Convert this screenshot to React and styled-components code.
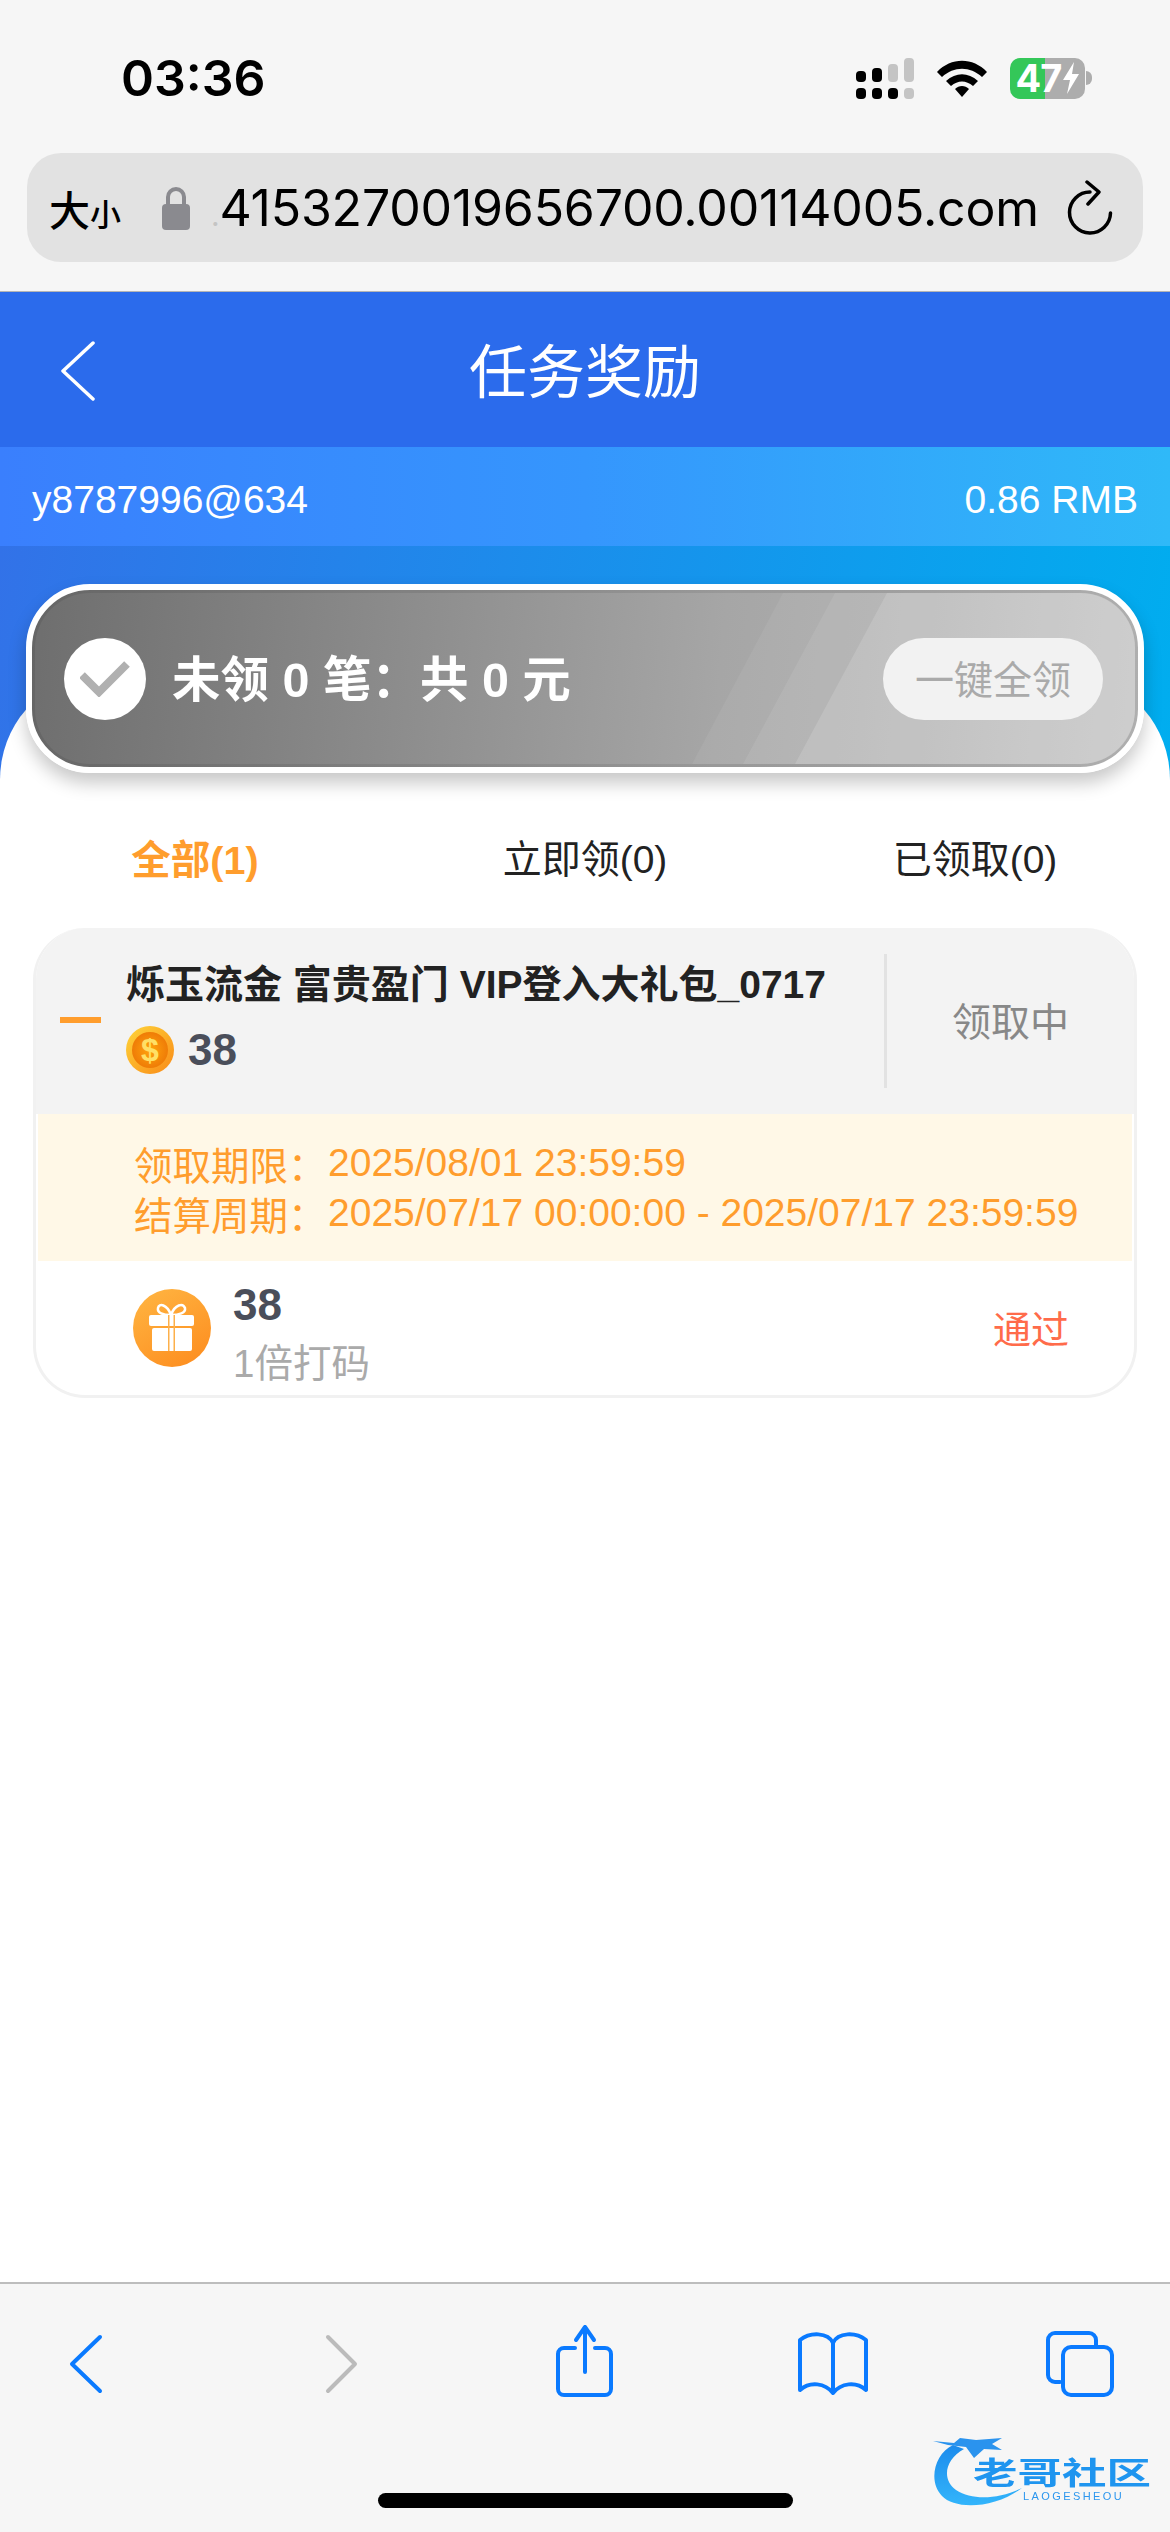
import styled, { createGlobalStyle } from 'styled-components';

const SANS = `"Liberation Sans", "Noto Sans CJK SC", sans-serif`;
const ORANGE = '#ff9d2d';

const GlobalStyle = createGlobalStyle`
  html, body {
    margin: 0;
    padding: 0;
    background: #fff;
  }
  * {
    box-sizing: border-box;
  }
`;

export default function App() {
  return (
    <Page>
      <GlobalStyle />
      <BrowserTop>
        <StatusBar>
          <Time>03:36</Time>
          <StatusIcons>
            <SignalIcon />
            <WifiIcon />
            <Battery>
              <BatteryLevel>
                47
                <BoltIcon />
              </BatteryLevel>
              <BatteryNub />
            </Battery>
          </StatusIcons>
        </StatusBar>
        <UrlBar>
          <TextSize>
            大<small>小</small>
          </TextSize>
          <LockIcon />
          <UrlText>
            <i>.</i>4153270019656700.00114005.com
          </UrlText>
          <ReloadIcon />
        </UrlBar>
      </BrowserTop>

      <NavBar>
        <NavBack />
        <NavTitle>任务奖励</NavTitle>
      </NavBar>

      <UserRow>
        <span>y8787996@634</span>
        <span>0.86 RMB</span>
      </UserRow>

      <Hero>
        <ClaimCard>
          <Stripe $top={748} $bottom={657} $alpha={0.06} />
          <Stripe $top={800} $bottom={708} $alpha={0.08} />
          <Stripe $top={852} $bottom={760} $alpha={0.14} />
          <CheckBadge>
            <CheckIcon />
          </CheckBadge>
          <ClaimText>未领 0 笔：共 0 元</ClaimText>
          <ClaimButton>一键全领</ClaimButton>
        </ClaimCard>
      </Hero>

      <Tabs>
        <Tab $active>全部(1)</Tab>
        <Tab>立即领(0)</Tab>
        <Tab>已领取(0)</Tab>
      </Tabs>

      <TaskCard>
        <TaskHead>
          <Dash />
          <TaskInfo>
            <TaskTitle>烁玉流金 富贵盈门 VIP登入大礼包_0717</TaskTitle>
            <AmountRow>
              <CoinIcon />
              <Amount>38</Amount>
            </AmountRow>
          </TaskInfo>
          <TaskStatus>领取中</TaskStatus>
        </TaskHead>
        <TaskDates>
          <DateLine>
            <DateLabel>领取期限：</DateLabel>2025/08/01 23:59:59
          </DateLine>
          <DateLine>
            <DateLabel>结算周期：</DateLabel>2025/07/17 00:00:00 - 2025/07/17 23:59:59
          </DateLine>
        </TaskDates>
        <TaskFoot>
          <GiftIcon />
          <RewardInfo>
            <Amount>38</Amount>
            <RewardNote>1倍打码</RewardNote>
          </RewardInfo>
          <PassLabel>通过</PassLabel>
        </TaskFoot>
      </TaskCard>

      <Spacer />

      <Toolbar>
        <ToolIcon viewBox="0 0 80 80">
          <path d="M54 19 L26 46 L54 73" />
        </ToolIcon>
        <ToolIcon viewBox="0 0 80 80" $muted>
          <path d="M33 19 L60 46 L33 73" />
        </ToolIcon>
        <ToolIcon viewBox="0 0 80 80">
          <path d="M32 30 H21 a6 6 0 0 0 -6 6 V71 a6 6 0 0 0 6 6 H62 a6 6 0 0 0 6 -6 V36 a6 6 0 0 0 -6 -6 H52" />
          <path d="M42 54 V9 M33 22 L42 9 L51 22" />
        </ToolIcon>
        <ToolIcon viewBox="0 0 80 80">
          <path d="M41 25 C36 14 18 14 8 22 V72 C18 63 33 65 41 75 C49 65 64 63 74 72 V22 C64 14 46 14 41 25 Z M41 25 V75" />
        </ToolIcon>
        <ToolIcon viewBox="0 0 80 80">
          <path d="M20 64 H15 a7 7 0 0 1 -7 -7 V22 a7 7 0 0 1 7 -7 H49 a7 7 0 0 1 7 7 V29" />
          <rect x="23" y="29" width="49" height="48" rx="8" />
        </ToolIcon>
      </Toolbar>

      <HomeIndicator />
      <Watermark>
        <DragonIcon />
        <WatermarkName>老哥社区</WatermarkName>
        <WatermarkLatin>LAOGESHEOU</WatermarkLatin>
      </Watermark>
    </Page>
  );
}

const SignalIcon = () => (
  <svg width="58" height="41" viewBox="0 0 58 41">
    <rect x="0" y="13" width="10" height="11" rx="4" fill="#000" />
    <rect x="16" y="10" width="10" height="14" rx="4" fill="#000" />
    <rect x="32" y="6" width="10" height="18" rx="4" fill="#c4c4c4" />
    <rect x="48" y="0" width="10" height="24" rx="4" fill="#c4c4c4" />
    <rect x="0" y="30" width="10" height="11" rx="4" fill="#000" />
    <rect x="16" y="30" width="10" height="11" rx="4" fill="#000" />
    <rect x="32" y="30" width="10" height="11" rx="4" fill="#000" />
    <rect x="48" y="30" width="10" height="11" rx="4" fill="#c4c4c4" />
  </svg>
);

const WifiIcon = () => (
  <svg width="52" height="38" viewBox="0 0 52 38">
    <path d="M1 13 C15 -2 37 -2 51 13 L46 18 C34 7 18 7 6 18 Z" fill="#000" />
    <path d="M10 22 C20 13 32 13 42 22 L37 27 C30 21 22 21 15 27 Z" fill="#000" />
    <path d="M19 30 C23 26 29 26 33 30 L26 38 Z" fill="#000" />
  </svg>
);

const BoltIcon = () => (
  <svg width="16" height="32" viewBox="0 0 16 32">
    <path d="M11 0 L0 18 H7 L4 32 L16 12 H9 Z" fill="#fff" />
  </svg>
);

const LockIcon = () => (
  <svg width="30" height="44" viewBox="0 0 30 44">
    <path d="M7 20 V11 a8 8 0 0 1 16 0 V20" fill="none" stroke="#8a8a8f" strokeWidth="4" />
    <rect x="1" y="18" width="28" height="26" rx="4" fill="#8a8a8f" />
  </svg>
);

const ReloadIcon = () => (
  <svg width="46" height="56" viewBox="0 0 46 56">
    <path
      d="M23 12 A20.5 20.5 0 1 0 43.5 33"
      fill="none"
      stroke="#000"
      strokeWidth="3.5"
      strokeLinecap="round"
    />
    <path
      d="M20 2 L32 12 L21 24"
      fill="none"
      stroke="#000"
      strokeWidth="3.5"
      strokeLinecap="round"
      strokeLinejoin="round"
    />
  </svg>
);

const NavBack = () => (
  <svg width="36" height="60" viewBox="0 0 36 60">
    <path
      d="M33 2 L3 30 L33 58"
      fill="none"
      stroke="#fff"
      strokeWidth="3.5"
      strokeLinecap="round"
      strokeLinejoin="round"
    />
  </svg>
);

const CheckIcon = () => (
  <svg width="50" height="36" viewBox="0 0 50 36">
    <path d="M2 14 L19 31 L47 3" fill="none" stroke="#b0b0b0" strokeWidth="8" />
  </svg>
);

const CoinIcon = () => (
  <svg width="48" height="48" viewBox="0 0 48 48">
    <defs>
      <linearGradient id="coinEdge" x1="0" y1="0" x2="1" y2="1">
        <stop offset="0" stopColor="#ffd53a" />
        <stop offset="1" stopColor="#f98a17" />
      </linearGradient>
      <radialGradient id="coinFace">
        <stop offset="0" stopColor="#ffa40d" />
        <stop offset="1" stopColor="#ef7c07" />
      </radialGradient>
    </defs>
    <circle cx="24" cy="24" r="24" fill="url(#coinEdge)" />
    <circle cx="24" cy="24" r="18" fill="url(#coinFace)" />
    <text x="24" y="35" textAnchor="middle" fontSize="32" fontWeight="700" fontFamily="Liberation Sans" fill="#ffe066">
      $
    </text>
  </svg>
);

const GiftIcon = () => (
  <svg width="78" height="78" viewBox="0 0 78 78">
    <defs>
      <linearGradient id="giftBg" x1="0.2" y1="0" x2="0.8" y2="1">
        <stop offset="0" stopColor="#ffb340" />
        <stop offset="1" stopColor="#fd8e20" />
      </linearGradient>
    </defs>
    <circle cx="39" cy="39" r="39" fill="url(#giftBg)" />
    <path
      d="M38 26 C30 26 24 24 25 19 C26 14 34 15 38 26 C42 15 50 14 52 19 C53 24 46 26 38 26 Z"
      fill="none"
      stroke="#fff"
      strokeWidth="2.5"
    />
    <rect x="16" y="26" width="45" height="11" rx="2" fill="#fff" />
    <rect x="19" y="39" width="40" height="23" rx="2" fill="#fff" />
    <rect x="35" y="26" width="1.5" height="36" fill="#fdb04a" />
    <rect x="40.5" y="26" width="1.5" height="36" fill="#fdb04a" />
  </svg>
);

const DragonIcon = () => (
  <DragonSvg viewBox="0 0 100 76">
    <defs>
      <linearGradient id="dragonFill" x1="0" y1="0" x2="0" y2="1">
        <stop offset="0" stopColor="#1c8bec" />
        <stop offset="1" stopColor="#33b5fb" />
      </linearGradient>
    </defs>
    <path
      d="M23 13 C4 22 -2 50 12 64 C24 77 62 78 92 56 C66 68 42 68 26 58 C12 48 14 28 34 17 Z"
      fill="url(#dragonFill)"
    />
    <path d="M3 9 L24 11 L30 6 L46 8 L72 6 L62 12 L72 18 L54 17 L44 26 L36 15 L18 13 Z" fill="#2a93ee" />
  </DragonSvg>
);

const Page = styled.div`
  position: relative;
  display: flex;
  flex-direction: column;
  width: 1170px;
  height: 2532px;
  overflow: hidden;
  background: #fff;
  font-family: ${SANS};
`;

const BrowserTop = styled.header`
  height: 292px;
  background: #f6f6f6;
  border-bottom: 1px solid #b5b5b5;
  padding: 0 27px;
`;

const StatusBar = styled.div`
  display: flex;
  align-items: center;
  justify-content: space-between;
  height: 153px;
  padding: 3px 51px 0 94px;
`;

const Time = styled.div`
  font-family: Inter, ${SANS};
  font-size: 50px;
  font-weight: 600;
  color: #000;
`;

const StatusIcons = styled.div`
  display: flex;
  align-items: center;
  gap: 22px;
`;

const Battery = styled.div`
  display: flex;
  align-items: center;
  gap: 1px;
`;

const BatteryLevel = styled.div`
  display: flex;
  align-items: center;
  justify-content: center;
  gap: 2px;
  width: 75px;
  height: 41px;
  border-radius: 10px;
  background: linear-gradient(90deg, #34c759 0 35px, #adadad 35px 100%);
  color: #fff;
  font-family: Inter, ${SANS};
  font-size: 38px;
  font-weight: 700;
  letter-spacing: -1px;
`;

const BatteryNub = styled.div`
  width: 6px;
  height: 14px;
  border-radius: 0 7px 7px 0;
  background: #adadad;
`;

const UrlBar = styled.div`
  display: flex;
  align-items: center;
  height: 109px;
  padding: 0 30px 0 22px;
  border-radius: 34px;
  background: #e2e2e2;
`;

const TextSize = styled.div`
  width: 112px;
  font-size: 41px;
  font-weight: 500;
  color: #000;

  small {
    font-size: 31px;
  }
`;

const UrlText = styled.div`
  flex: 1;
  margin-left: 20px;
  font-family: Inter, ${SANS};
  font-size: 50px;
  letter-spacing: -0.2px;
  color: #000;
  white-space: nowrap;

  i {
    color: #c4c4c4;
    font-style: normal;
    font-size: 30px;
  }
`;

const NavBar = styled.div`
  position: relative;
  display: flex;
  align-items: center;
  justify-content: center;
  height: 155px;
  padding-bottom: 4px;
  background: #2b6bec;

  svg {
    position: absolute;
    left: 60px;
    top: 49px;
  }
`;

const NavTitle = styled.h1`
  margin: 0;
  font-size: 58px;
  font-weight: 400;
  color: #fff;
`;

const UserRow = styled.div`
  display: flex;
  align-items: center;
  justify-content: space-between;
  height: 99px;
  padding: 6px 32px 0;
  background: linear-gradient(90deg, #3a7ffd, #3596fd 50%, #2fb9f8);
  color: #fff;
  font-size: 39px;
`;

const Hero = styled.div`
  position: relative;
  height: 254px;
  padding: 38px 26px 0;
  background: linear-gradient(100deg, #3272e8, #00aeef);

  &::before {
    content: '';
    position: absolute;
    left: 0;
    right: 0;
    top: 134px;
    bottom: 0;
    background: #fff;
    border-radius: 90px 90px 0 0 / 100px 100px 0 0;
  }
`;

const ClaimCard = styled.div`
  position: relative;
  display: flex;
  align-items: center;
  height: 189px;
  padding: 0 35px 0 32px;
  border: 6px solid #fff;
  border-radius: 64px;
  overflow: hidden;
  background: linear-gradient(95deg, #6e6e6e, #a6a6a6 62%, #acacac 75%, #bebebe);
  box-shadow: 0 10px 18px rgba(0, 0, 0, 0.22), inset 0 0 0 3px rgba(0, 0, 0, 0.08);
`;

const Stripe = styled.div`
  position: absolute;
  inset: 3px;
  border-radius: 54px;
  background: rgba(255, 255, 255, ${({ $alpha }) => $alpha});
  clip-path: polygon(
    ${({ $top }) => $top}px 0,
    100% 0,
    100% 100%,
    ${({ $bottom }) => $bottom}px 100%
  );
`;

const CheckBadge = styled.div`
  position: relative;
  display: flex;
  align-items: center;
  justify-content: center;
  flex: none;
  width: 82px;
  height: 82px;
  border-radius: 50%;
  background: #fff;
`;

const ClaimText = styled.div`
  position: relative;
  flex: 1;
  margin: 0 0 5px 26px;
  font-size: 48.5px;
  font-weight: 700;
  color: #fff;
  white-space: pre;
`;

const ClaimButton = styled.div`
  position: relative;
  display: flex;
  align-items: center;
  justify-content: center;
  width: 220px;
  height: 82px;
  padding-bottom: 4px;
  border-radius: 41px;
  background: #f2f2f2;
  color: #aaa;
  font-size: 39px;
`;

const Tabs = styled.div`
  display: grid;
  grid-template-columns: 390px 390px 390px;
  height: 128px;
  padding-bottom: 16px;
`;

const Tab = styled.div`
  display: flex;
  align-items: center;
  justify-content: center;
  font-size: ${({ $active }) => ($active ? 39.5 : 39)}px;
  font-weight: ${({ $active }) => ($active ? 700 : 400)};
  color: ${({ $active }) => ($active ? ORANGE : '#222')};
`;

const TaskCard = styled.section`
  margin: 0 33px;
  height: 470px;
  border: 3px solid #f1f1f1;
  border-top: 0;
  border-radius: 52px;
  overflow: hidden;
  background: #fff;
`;

const TaskHead = styled.div`
  display: flex;
  align-items: center;
  height: 186px;
  padding-left: 24px;
  background: #f3f3f3;
`;

const Dash = styled.div`
  flex: none;
  width: 41px;
  height: 6px;
  margin-bottom: 2px;
  background: ${ORANGE};
`;

const TaskInfo = styled.div`
  flex: 1;
  display: flex;
  flex-direction: column;
  gap: 17px;
  padding: 0 0 16px 25px;
`;

const TaskTitle = styled.div`
  font-size: 39px;
  font-weight: 700;
  color: #222;
  white-space: pre;
`;

const AmountRow = styled.div`
  display: flex;
  align-items: center;
  gap: 14px;
`;

const Amount = styled.div`
  font-size: 44px;
  line-height: 48px;
  font-weight: 700;
  color: #4a4e5a;
`;

const TaskStatus = styled.div`
  display: flex;
  align-items: center;
  justify-content: center;
  flex: none;
  width: 250px;
  height: 134px;
  padding-bottom: 4px;
  border-left: 3px solid #e2e2e2;
  color: #888;
  font-size: 39px;
`;

const TaskDates = styled.div`
  display: flex;
  flex-direction: column;
  justify-content: center;
  gap: 4px;
  height: 147px;
  padding-left: 96px;
  margin: 0 2px;
  background: #fff8e7;
`;

const DateLine = styled.div`
  display: flex;
  align-items: center;
  height: 46px;
  font-size: 39px;
  color: ${ORANGE};
  white-space: pre;
`;

const DateLabel = styled.span`
  width: 194px;
  font-size: 38.5px;
`;

const TaskFoot = styled.div`
  display: flex;
  align-items: center;
  height: 134px;
  padding: 0 65px 0 97px;
`;

const RewardInfo = styled.div`
  flex: 1;
  display: flex;
  flex-direction: column;
  gap: 3px;
  padding: 12px 0 0 22px;
`;

const RewardNote = styled.div`
  font-size: 38.5px;
  color: #aaa;
`;

const PassLabel = styled.div`
  margin-bottom: 3px;
  font-size: 38px;
  color: #ff6b4a;
`;

const Spacer = styled.div`
  flex: 1;
`;

const Toolbar = styled.footer`
  display: flex;
  justify-content: space-between;
  height: 250px;
  padding: 34px 50px 0 46px;
  background: #f6f6f6;
  border-top: 2px solid #bdbdbd;
`;

const ToolIcon = styled.svg`
  width: 80px;
  height: 80px;
  fill: none;
  stroke: ${({ $muted }) => ($muted ? '#bbbbbb' : '#0a7aff')};
  stroke-width: 4;
  stroke-linecap: round;
  stroke-linejoin: round;
`;

const HomeIndicator = styled.div`
  position: absolute;
  left: 378px;
  top: 2493px;
  width: 415px;
  height: 15px;
  border-radius: 8px;
  background: #000;
`;

const Watermark = styled.div`
  position: absolute;
  left: 930px;
  top: 2432px;
  width: 230px;
  height: 76px;
  filter: blur(0.6px);
`;

const DragonSvg = styled.svg`
  position: absolute;
  left: 0;
  top: 0;
  width: 100px;
  height: 76px;
`;

const WatermarkName = styled.div`
  position: absolute;
  left: 43px;
  top: 28px;
  height: 28px;
  font-size: 44.5px;
  line-height: 28px;
  font-weight: 700;
  white-space: nowrap;
  transform: scaleY(0.68);
  color: #1f95ef;
`;

const WatermarkLatin = styled.div`
  position: absolute;
  left: 93px;
  top: 58px;
  font-size: 11px;
  line-height: 12px;
  letter-spacing: 2.4px;
  color: #2b96ee;
  white-space: nowrap;
`;
